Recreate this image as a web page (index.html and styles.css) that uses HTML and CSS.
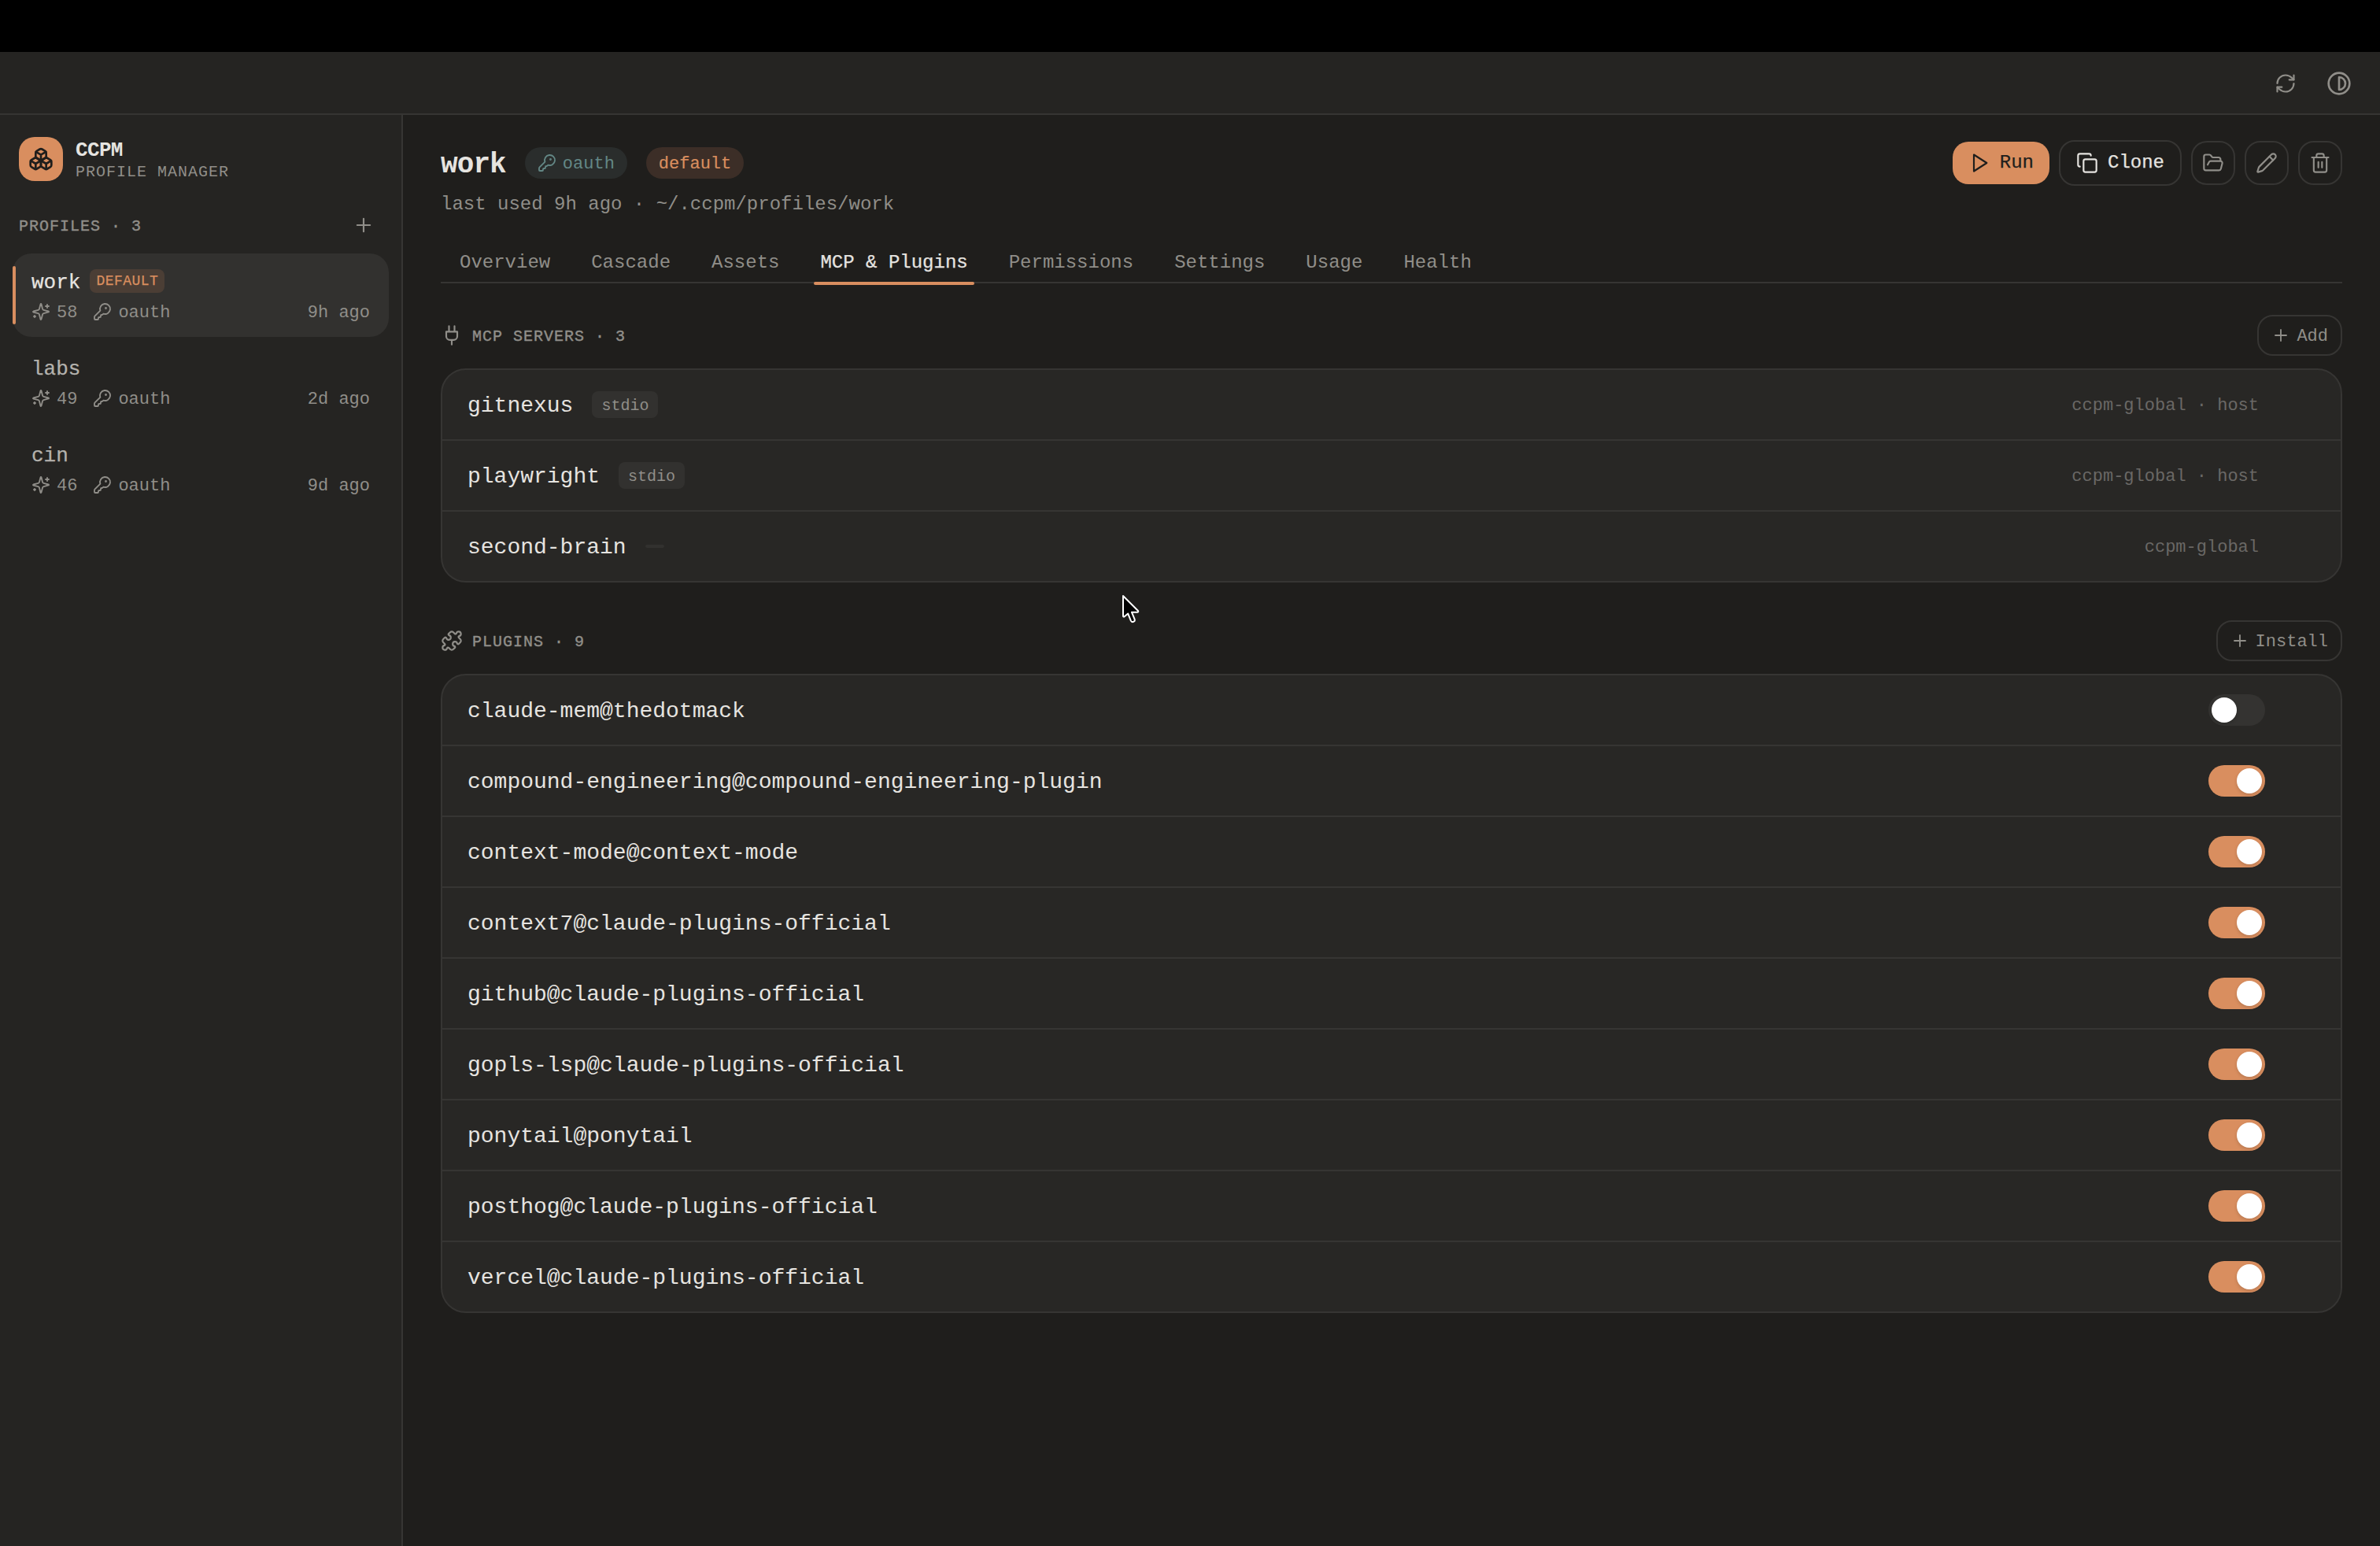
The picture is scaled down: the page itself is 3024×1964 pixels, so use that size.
FILE: index.html
```html
<!DOCTYPE html>
<html lang="en">
  <head>
    <meta charset="UTF-8" />
    <meta name="viewport" content="width=device-width, initial-scale=1.0" />
    <title>CCPM</title>
    <link rel="stylesheet" href="styles.css" />
  </head>
  <body>
    <!-- icon sprite -->
    <svg class="sprite">
      <symbol id="i-plus" viewBox="0 0 24 24"><path d="M5 12h14M12 5v14" /></symbol>
      <symbol id="i-refresh" viewBox="0 0 24 24">
        <path d="M3 12a9 9 0 0 1 9-9 9.75 9.75 0 0 1 6.74 2.74L21 8" />
        <path d="M21 3v5h-5" />
        <path d="M21 12a9 9 0 0 1-9 9 9.75 9.75 0 0 1-6.74-2.74L3 16" />
        <path d="M8 16H3v5" />
      </symbol>
      <symbol id="i-contrast" viewBox="0 0 24 24">
        <circle cx="12" cy="12" r="10" />
        <path d="M12 18a6 6 0 0 0 0-12v12z" />
      </symbol>
      <symbol id="i-boxes" viewBox="0 0 24 24">
        <path d="M2.97 12.92A2 2 0 0 0 2 14.63v3.24a2 2 0 0 0 .97 1.71l3 1.8a2 2 0 0 0 2.06 0L12 19v-5.5l-5-3-4.03 2.42Z" />
        <path d="m7 16.5-4.74-2.85M7 16.5l5-3M7 16.5v5.17" />
        <path d="M12 13.5V19l3.97 2.38a2 2 0 0 0 2.06 0l3-1.8a2 2 0 0 0 .97-1.71v-3.24a2 2 0 0 0-.97-1.71L17 10.5l-5 3Z" />
        <path d="m17 16.5-5-3M17 16.5l4.74-2.85M17 16.5v5.17" />
        <path d="M7.97 4.42A2 2 0 0 0 7 6.13v4.37l5 3 5-3V6.13a2 2 0 0 0-.97-1.71l-3-1.8a2 2 0 0 0-2.06 0l-3 1.8Z" />
        <path d="M12 8 7.26 5.15M12 8l4.74-2.85M12 13.5V8" />
      </symbol>
      <symbol id="i-sparkles" viewBox="0 0 24 24">
        <path d="M9.937 15.5A2 2 0 0 0 8.5 14.063l-6.135-1.582a.5.5 0 0 1 0-.962L8.5 9.936A2 2 0 0 0 9.937 8.5l1.582-6.135a.5.5 0 0 1 .963 0L14.063 8.5A2 2 0 0 0 15.5 9.937l6.135 1.581a.5.5 0 0 1 0 .964L15.5 14.063a2 2 0 0 0-1.437 1.437l-1.582 6.135a.5.5 0 0 1-.963 0z" />
        <path d="M20 3v4M22 5h-4M4 17v2M5 18H3" />
      </symbol>
      <symbol id="i-key" viewBox="0 0 24 24">
        <path d="M2.586 17.414A2 2 0 0 0 2 18.828V21a1 1 0 0 0 1 1h3a1 1 0 0 0 1-1v-1a1 1 0 0 1 1-1h1a1 1 0 0 0 1-1v-1a1 1 0 0 1 1-1h.172a2 2 0 0 0 1.414-.586l.814-.814a6.5 6.5 0 1 0-4-4z" />
        <circle cx="16.5" cy="7.5" r=".5" fill="currentColor" />
      </symbol>
      <symbol id="i-play" viewBox="0 0 24 24"><path d="M6 3l14 9-14 9z" /></symbol>
      <symbol id="i-copy" viewBox="0 0 24 24">
        <rect x="8" y="8" width="14" height="14" rx="2" />
        <path d="M4 16c-1.1 0-2-.9-2-2V4c0-1.1.9-2 2-2h10c1.1 0 2 .9 2 2" />
      </symbol>
      <symbol id="i-folder" viewBox="0 0 24 24">
        <path d="m6 14 1.5-2.9A2 2 0 0 1 9.24 10H20a2 2 0 0 1 1.94 2.5l-1.54 6a2 2 0 0 1-1.95 1.5H4a2 2 0 0 1-2-2V5a2 2 0 0 1 2-2h3.9a2 2 0 0 1 1.69.9l.81 1.2a2 2 0 0 0 1.67.9H18a2 2 0 0 1 2 2v2" />
      </symbol>
      <symbol id="i-pencil" viewBox="0 0 24 24">
        <path d="M21.174 6.812a1 1 0 0 0-3.986-3.987L3.842 16.174a2 2 0 0 0-.5.83l-1.321 4.352a.5.5 0 0 0 .623.622l4.353-1.32a2 2 0 0 0 .83-.497z" />
        <path d="m15 5 4 4" />
      </symbol>
      <symbol id="i-trash" viewBox="0 0 24 24">
        <path d="M3 6h18M19 6v14a2 2 0 0 1-2 2H7a2 2 0 0 1-2-2V6M8 6V4a2 2 0 0 1 2-2h4a2 2 0 0 1 2 2v2M10 11v6M14 11v6" />
      </symbol>
      <symbol id="i-plug" viewBox="0 0 24 24">
        <path d="M12 22v-5M9 8V2M15 8V2M18 8v5a4 4 0 0 1-4 4h-4a4 4 0 0 1-4-4V8Z" />
      </symbol>
      <symbol id="i-puzzle" viewBox="0 0 24 24">
        <path d="M15.39 4.39a1 1 0 0 0 1.68-.474 2.5 2.5 0 1 1 3.014 3.015 1 1 0 0 0-.474 1.68l1.683 1.682a2.414 2.414 0 0 1 0 3.414L19.61 15.39a1 1 0 0 1-1.68-.474 2.5 2.5 0 1 0-3.014 3.015 1 1 0 0 1 .474 1.68l-1.683 1.682a2.414 2.414 0 0 1-3.414 0L8.61 19.61a1 1 0 0 0-1.68.474 2.5 2.5 0 1 1-3.014-3.015 1 1 0 0 0 .474-1.68l-1.683-1.682a2.414 2.414 0 0 1 0-3.414L4.39 8.61a1 1 0 0 1 1.68.474 2.5 2.5 0 1 0 3.014-3.015 1 1 0 0 1-.474-1.68l1.683-1.682a2.414 2.414 0 0 1 3.414 0z" />
      </symbol>
    </svg>

    <div class="notch"></div>
    <header class="topbar">
      <button class="ghost"><svg class="icon s28"><use href="#i-refresh" /></svg></button>
      <button class="ghost"><svg class="icon s32"><use href="#i-contrast" /></svg></button>
    </header>

    <div class="layout">
      <aside class="sidebar">
        <div class="brand">
          <div class="logo"><svg class="icon s32"><use href="#i-boxes" /></svg></div>
          <div class="brand-text">
            <div class="brand-name">CCPM</div>
            <div class="brand-sub">PROFILE MANAGER</div>
          </div>
        </div>
        <div class="side-head">
          <span class="label">PROFILES · 3</span>
          <button class="ghost-small"><svg class="icon s28"><use href="#i-plus" /></svg></button>
        </div>
        <ul class="profiles">
          <li class="profile selected">
            <div class="profile-name"><span class="text">work</span><span class="tag">DEFAULT</span></div>
            <div class="profile-meta">
              <svg class="icon s24"><use href="#i-sparkles" /></svg><span class="text count">58</span>
              <svg class="icon s24"><use href="#i-key" /></svg><span class="text">oauth</span>
              <span class="text ago">9h ago</span>
            </div>
          </li>
          <li class="profile">
            <div class="profile-name"><span class="text">labs</span></div>
            <div class="profile-meta">
              <svg class="icon s24"><use href="#i-sparkles" /></svg><span class="text count">49</span>
              <svg class="icon s24"><use href="#i-key" /></svg><span class="text">oauth</span>
              <span class="text ago">2d ago</span>
            </div>
          </li>
          <li class="profile">
            <div class="profile-name"><span class="text">cin</span></div>
            <div class="profile-meta">
              <svg class="icon s24"><use href="#i-sparkles" /></svg><span class="text count">46</span>
              <svg class="icon s24"><use href="#i-key" /></svg><span class="text">oauth</span>
              <span class="text ago">9d ago</span>
            </div>
          </li>
        </ul>
      </aside>

      <main class="main">
        <div class="title-row">
          <h1 class="text">work</h1>
          <span class="badge teal"><svg class="icon s24"><use href="#i-key" /></svg><span class="text">oauth</span></span>
          <span class="badge orange"><span class="text">default</span></span>
          <div class="actions">
            <button class="btn primary"><svg class="icon s28"><use href="#i-play" /></svg><span>Run</span></button>
            <button class="btn outline"><svg class="icon s28"><use href="#i-copy" /></svg><span>Clone</span></button>
            <button class="btn square"><svg class="icon s28"><use href="#i-folder" /></svg></button>
            <button class="btn square"><svg class="icon s28"><use href="#i-pencil" /></svg></button>
            <button class="btn square"><svg class="icon s28"><use href="#i-trash" /></svg></button>
          </div>
        </div>
        <p class="subtitle text">last used 9h ago · ~/.ccpm/profiles/work</p>

        <nav class="tabs">
          <a class="tab"><span class="text">Overview</span></a>
          <a class="tab"><span class="text">Cascade</span></a>
          <a class="tab"><span class="text">Assets</span></a>
          <a class="tab active"><span class="text">MCP &amp; Plugins</span></a>
          <a class="tab"><span class="text">Permissions</span></a>
          <a class="tab"><span class="text">Settings</span></a>
          <a class="tab"><span class="text">Usage</span></a>
          <a class="tab"><span class="text">Health</span></a>
        </nav>

        <section class="section">
          <div class="section-head">
            <svg class="icon s28"><use href="#i-plug" /></svg>
            <h2 class="label">MCP SERVERS · 3</h2>
            <button class="btn-small"><svg class="icon s24"><use href="#i-plus" /></svg><span class="text">Add</span></button>
          </div>
          <div class="card">
            <div class="row"><span class="text">gitnexus</span><span class="pill"><span class="text">stdio</span></span><span class="text source">ccpm-global · host</span></div>
            <div class="row"><span class="text">playwright</span><span class="pill"><span class="text">stdio</span></span><span class="text source">ccpm-global · host</span></div>
            <div class="row"><span class="text">second-brain</span><span class="pill"></span><span class="text source">ccpm-global</span></div>
          </div>
        </section>

        <section class="section plugins">
          <div class="section-head">
            <svg class="icon s28"><use href="#i-puzzle" /></svg>
            <h2 class="label">PLUGINS · 9</h2>
            <button class="btn-small"><svg class="icon s24"><use href="#i-plus" /></svg><span class="text">Install</span></button>
          </div>
          <div class="card">
            <div class="row"><span class="text">claude-mem@thedotmack</span><span class="switch"></span></div>
            <div class="row"><span class="text">compound-engineering@compound-engineering-plugin</span><span class="switch on"></span></div>
            <div class="row"><span class="text">context-mode@context-mode</span><span class="switch on"></span></div>
            <div class="row"><span class="text">context7@claude-plugins-official</span><span class="switch on"></span></div>
            <div class="row"><span class="text">github@claude-plugins-official</span><span class="switch on"></span></div>
            <div class="row"><span class="text">gopls-lsp@claude-plugins-official</span><span class="switch on"></span></div>
            <div class="row"><span class="text">ponytail@ponytail</span><span class="switch on"></span></div>
            <div class="row"><span class="text">posthog@claude-plugins-official</span><span class="switch on"></span></div>
            <div class="row"><span class="text">vercel@claude-plugins-official</span><span class="switch on"></span></div>
          </div>
        </section>
      </main>
    </div>

    <svg class="cursor" viewBox="0 0 24 38">
      <path d="M2 2v25.500c0 1 1 1.300 1.700.7L8.200 24.500l3.600 8.800c1.500 3.400 6 1.500 4.700-1.900L13 22.800h7c1.200 0 1.600-1.300.8-2.100z" />
    </svg>
  </body>
</html>
```
FILE: styles.css
```css
:root {
  --bg: #1f1e1c;
  --panel: #252422;
  --card: #282725;
  --line: #363533;
  --text: #e6e4e0;
  --muted: #908e89;
  --dim: #6a6865;
  --accent: #d98e5f;
}

* {
  box-sizing: border-box;
}

body {
  margin: 0;
  height: 100vh;
  overflow: hidden;
  display: flex;
  flex-direction: column;
  background-color: var(--bg);
  color: var(--text);
  font-family: "Liberation Mono", monospace;
  font-size: 24px;
  line-height: 1;
}

h1,
h2,
p,
ul {
  margin: 0;
  padding: 0;
}

button {
  font: inherit;
  color: inherit;
  background: none;
  border: none;
  padding: 0;
  display: flex;
  align-items: center;
  justify-content: center;
}

/* nudges the text down so it sits level with the icons */
.text,
.label {
  padding-top: 0.16em;
  white-space: pre;
}

.sprite {
  display: none;
}

.icon {
  flex: none;
  fill: none;
  stroke: currentColor;
  stroke-width: 1.85;
  stroke-linecap: round;
  stroke-linejoin: round;
}
.s24 { width: 24px; height: 24px; }
.s28 { width: 28px; height: 28px; }
.s32 { width: 32px; height: 32px; stroke-width: 2; }

.notch {
  flex: none;
  height: 66px;
  background-color: #000;
}

.topbar {
  flex: none;
  height: 80px;
  padding: 2px 24px 0;
  display: flex;
  justify-content: flex-end;
  align-items: center;
  gap: 12px;
  background-color: var(--panel);
  border-bottom: 2px solid var(--line);
  color: var(--muted);
}
.ghost {
  width: 56px;
  height: 56px;
}

.layout {
  flex: 1;
  display: flex;
  min-height: 0;
}

/* sidebar */
.sidebar {
  flex: none;
  width: 512px;
  background-color: var(--panel);
  border-right: 2px solid var(--line);
}
.brand {
  height: 112px;
  padding: 0 24px;
  display: flex;
  align-items: center;
  gap: 16px;
}
.logo {
  width: 56px;
  height: 56px;
  border-radius: 20px;
  display: flex;
  align-items: center;
  justify-content: center;
  background-color: var(--accent);
  color: var(--bg);
}
.brand-text {
  padding-top: 3px;
}
.brand-name {
  font-size: 26px;
  line-height: 28px;
  font-weight: bold;
  letter-spacing: -0.025em;
}
.brand-sub {
  margin-top: 2px;
  font-size: 20px;
  line-height: 24px;
  letter-spacing: 1px;
  color: var(--muted);
}
.side-head {
  height: 56px;
  padding: 0 34px 0 24px;
  display: flex;
  align-items: center;
  justify-content: space-between;
  color: var(--muted);
}
.label {
  font-size: 20px;
  font-weight: normal;
  letter-spacing: 1px;
  color: var(--muted);
  -webkit-text-stroke: 0.4px currentColor;
}
.profiles {
  list-style: none;
  padding: 8px 16px;
  display: flex;
  flex-direction: column;
  gap: 4px;
}
.profile {
  position: relative;
  height: 106px;
  padding: 19px 24px 17px;
  border-radius: 24px;
  display: flex;
  flex-direction: column;
  gap: 8px;
}
.profile.selected {
  background-color: #32312f;
}
.profile.selected::before {
  content: "";
  position: absolute;
  left: 0;
  top: 16px;
  bottom: 16px;
  width: 4px;
  border-radius: 2px;
  background-color: var(--accent);
}
.profile-name {
  height: 32px;
  display: flex;
  align-items: center;
  gap: 12px;
  font-size: 26px;
  color: #b4b2ad;
  -webkit-text-stroke: 0.25px currentColor;
}
.selected .profile-name {
  color: var(--text);
}
.tag {
  height: 30px;
  padding: 0 8px;
  border-radius: 8px;
  font-size: 18px;
  line-height: 30px;
  letter-spacing: 0.45px;
  background-color: #4b3e35;
  color: var(--accent);
}
.profile-meta {
  height: 30px;
  display: flex;
  align-items: center;
  gap: 8px;
  font-size: 22px;
  color: var(--muted);
}
.count {
  margin-right: 12px;
}
.ago {
  margin-left: auto;
}

/* main */
.main {
  flex: 1;
  padding: 32px 48px;
}
.title-row {
  height: 58px;
  display: flex;
  align-items: center;
  gap: 24px;
}
.title-row h1 {
  font-size: 36px;
  letter-spacing: -0.025em;
}
.badge {
  height: 40px;
  padding: 0 16px;
  border-radius: 20px;
  display: flex;
  align-items: center;
  gap: 8px;
  font-size: 22px;
}
.teal {
  background-color: #2a2d2c;
  color: #638785;
}
.orange {
  background-color: #3c2e27;
  color: var(--accent);
  -webkit-text-stroke: 0.2px currentColor;
}
.actions {
  margin-left: auto;
  display: flex;
  align-items: center;
  gap: 12px;
}
.btn {
  height: 54px;
  padding: 0 20px;
  gap: 12px;
  border-radius: 20px;
  -webkit-text-stroke: 0.25px currentColor;
}
.btn.primary {
  background-color: var(--accent);
  color: var(--bg);
}
.btn.outline {
  height: 58px;
  border: 2px solid var(--line);
}
.btn.square {
  width: 56px;
  height: 56px;
  padding: 0;
  border: 2px solid var(--line);
  color: var(--muted);
}
.subtitle {
  margin-top: 6px;
  line-height: 28px;
  height: 32px;
  color: var(--muted);
}
.tabs {
  margin-top: 32px;
  height: 54px;
  display: flex;
  gap: 4px;
  border-bottom: 2px solid var(--line);
}
.tab {
  position: relative;
  height: 52px;
  padding: 0 24px;
  display: flex;
  align-items: center;
  color: var(--muted);
}
.tab.active {
  color: var(--text);
  -webkit-text-stroke: 0.25px currentColor;
}
.tab.active::after {
  content: "";
  position: absolute;
  left: 16px;
  right: 16px;
  bottom: -4px;
  height: 4px;
  border-radius: 2px;
  background-color: var(--accent);
}

.section {
  margin-top: 40px;
}
.section.plugins {
  margin-top: 48px;
}
.section-head {
  height: 52px;
  display: flex;
  align-items: center;
  gap: 12px;
  color: var(--muted);
}
.btn-small {
  margin-left: auto;
  height: 52px;
  padding: 0 16px;
  gap: 8px;
  border: 2px solid var(--line);
  border-radius: 20px;
  font-size: 22px;
}
.card {
  margin-top: 16px;
  border: 2px solid var(--line);
  border-radius: 32px;
  background-color: var(--card);
}
.row {
  height: 88px;
  padding: 0 96px 0 32px;
  display: flex;
  align-items: center;
  gap: 24px;
  font-size: 28px;
}
.row + .row {
  height: 90px;
  border-top: 2px solid var(--line);
}
.pill {
  padding: 2px 12px;
  border-radius: 8px;
  font-size: 20px;
  background-color: #32312f;
  color: var(--muted);
}
.pill .text {
  display: block;
  line-height: 27px;
}
.source {
  margin-left: auto;
  margin-right: 8px;
  font-size: 22px;
  color: var(--dim);
}
.switch {
  margin-left: auto;
  width: 72px;
  height: 40px;
  padding: 4px;
  border-radius: 20px;
  display: flex;
  background-color: #343331;
}
.switch::before {
  content: "";
  width: 32px;
  height: 32px;
  border-radius: 50%;
  background-color: #fff;
  box-shadow: 0 2px 4px rgba(0, 0, 0, 0.15);
}
.switch.on {
  justify-content: flex-end;
  background-color: var(--accent);
}

/* mouse pointer */
.cursor {
  position: absolute;
  left: 1425px;
  top: 755px;
  width: 24px;
  height: 38px;
  fill: #000;
  stroke: #fff;
  stroke-width: 2;
  stroke-linejoin: round;
}
```
